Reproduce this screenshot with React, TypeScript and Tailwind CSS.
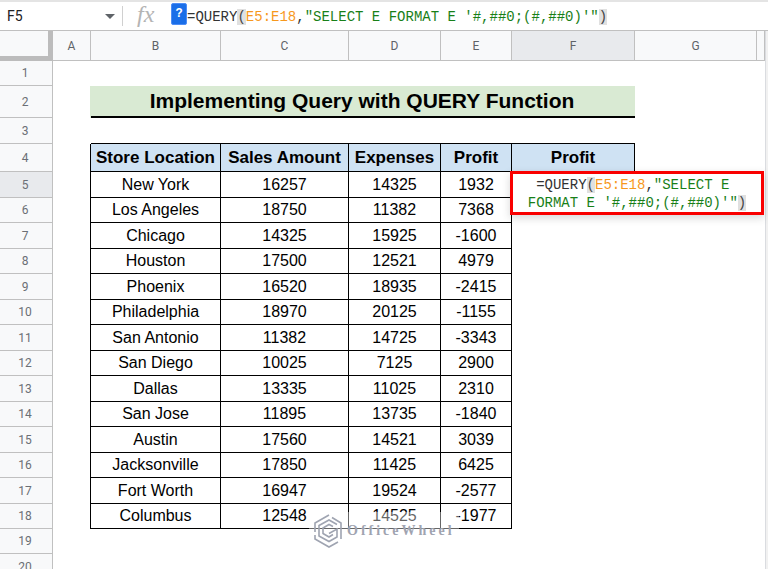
import { ReactNode } from "react"
import { clsx } from "clsx"

const columns = [
  { name: "A", width: "w-[38px]" },
  { name: "B", width: "w-[130px]" },
  { name: "C", width: "w-32" },
  { name: "D", width: "w-[92px]" },
  { name: "E", width: "w-[71px]" },
  { name: "F", width: "w-[123px]" },
  { name: "G", width: "w-[122px]" },
  { name: "", width: "" },
]

const headings = ["Store Location", "Sales Amount", "Expenses", "Profit", "Profit"]

const stores = [
  ["New York", 16257, 14325, 1932],
  ["Los Angeles", 18750, 11382, 7368],
  ["Chicago", 14325, 15925, -1600],
  ["Houston", 17500, 12521, 4979],
  ["Phoenix", 16520, 18935, -2415],
  ["Philadelphia", 18970, 20125, -1155],
  ["San Antonio", 11382, 14725, -3343],
  ["San Diego", 10025, 7125, 2900],
  ["Dallas", 13335, 11025, 2310],
  ["San Jose", 11895, 13735, -1840],
  ["Austin", 17560, 14521, 3039],
  ["Jacksonville", 17850, 11425, 6425],
  ["Fort Worth", 16947, 19524, -2577],
  ["Columbus", 12548, 14525, -1977],
]

function RowHeader({ children, active = false }: { children: ReactNode; active?: boolean }) {
  return (
    <th
      scope="row"
      className={clsx(
        "border-r border-b border-[#c0c0c0] p-0 pr-0.5 font-['Roboto',sans-serif] text-xs font-normal text-[#6b6f75]",
        active ? "bg-[#e8eaed]" : "bg-[#f8f9fa]"
      )}
    >
      {children}
    </th>
  )
}

function Formula() {
  return (
    <>
      <span className="text-[#333333]">=QUERY</span>
      <span className="bg-[#e0e0e0] text-[#444444]">(</span>
      <span className="text-[#f7981d]">E5:E18</span>
      <span className="text-[#333333]">,</span>
      <span className="text-[#188018]">"SELECT E </span>
      <span className="text-[#188018]">FORMAT E '#,##0;(#,##0)'"</span>
      <span className="bg-[#e0e0e0] text-[#444444]">)</span>
    </>
  )
}

function FormulaBar() {
  return (
    <header className="flex h-[31px] items-center border-t-2 border-b border-t-[#e4e4e4] border-b-[#c0c0c0] bg-white">
      <input
        aria-label="Name box"
        defaultValue="F5"
        className="w-[103px] pl-[7px] font-['Roboto',sans-serif] text-sm text-[#202124] outline-none"
      />
      <button aria-label="Named ranges" className="flex h-5 w-5 items-center border-r border-[#d0d0d0]">
        <svg viewBox="0 0 10 5" className="ml-[2px] h-[5px] w-[10px]" fill="#5f6368">
          <path d="M0 0h10L5 5z" />
        </svg>
      </button>
      <span className="w-12 pb-1 pl-3.5 font-['Liberation_Serif',serif] text-2xl leading-6 text-[#b4b4b4] italic">
        fx
      </span>
      <div className="relative flex-1 pl-4">
        <button
          aria-label="Formula help"
          className="absolute -top-1 left-0 h-[22px] w-4 rounded-xs border border-[#4d8df6] bg-[#1a6ee8] font-['Liberation_Mono',monospace] text-xs leading-4 font-bold text-white"
        >
          ?
        </button>
        <div
          role="textbox"
          aria-label="Formula"
          contentEditable
          suppressContentEditableWarning
          className="pt-px font-['Liberation_Mono',monospace] text-sm leading-[18px] whitespace-nowrap outline-none"
        >
          <Formula />
        </div>
      </div>
    </header>
  )
}

function CellEditor() {
  return (
    <div className="absolute -top-px -left-[2px] z-10 w-[254px] border-[3px] border-[#f90000] bg-white pt-0.5 shadow-[0_3px_8px_rgba(60,64,67,0.2)]">
      <div
        role="textbox"
        aria-label="Cell F5"
        contentEditable
        suppressContentEditableWarning
        className="px-3 text-center font-['Liberation_Mono',monospace] text-sm leading-[18px] whitespace-break-spaces outline-none"
      >
        <Formula />
      </div>
    </div>
  )
}

function Watermark() {
  return (
    <div className="absolute top-2 left-[88px] z-10 flex h-9 w-[150px] items-center gap-1 bg-white/40 pt-px pl-1 text-[#9fa4b1]">
      <svg viewBox="0 0 30 34" className="h-[34px] w-[30px] shrink-0" fill="none" stroke="currentColor" strokeWidth="1.6">
        <path d="M16 1 2 9v9M2 21v4l14 8 9-5" />
        <path d="M19 3.500 28 9v16" />
        <path d="M24 10.500 16 6 6 11.500V22l10 5.500 8-4.500v-8l-8 4.500" />
        <path d="M20 12.500 16 10.500 10 14v5.500l6 3.500 4-2.500" />
      </svg>
      <span className="font-['Liberation_Serif',serif] text-sm font-bold tracking-[3px]">OfficeWheel</span>
    </div>
  )
}

export default function App() {
  return (
    <div className="flex h-screen flex-col overflow-hidden bg-white">
      <FormulaBar />
      <main className="flex min-h-0 flex-1">
        <table className="w-full flex-1 table-fixed border-separate border-spacing-0 self-start text-center font-['Liberation_Sans',Arial,sans-serif] text-base leading-5 text-black">
          <colgroup>
            <col className="w-[53px]" />
            {columns.map((column) => (
              <col key={column.name} className={column.width} />
            ))}
          </colgroup>
          <thead>
            <tr className="h-[30px]">
              <td className="border-r-[5px] border-b-[5px] border-[#bcbcbc] bg-[#f8f9fa] p-0" />
              {columns.map((column) => (
                <th
                  key={column.name}
                  scope="col"
                  className={clsx(
                    "border-r border-b border-[#c0c0c0] p-0 font-['Roboto',sans-serif] text-xs font-normal text-[#5f6368]",
                    column.name === "F" ? "bg-[#e8eaed]" : "bg-[#f8f9fa]"
                  )}
                >
                  {column.name}
                </th>
              ))}
            </tr>
          </thead>
          <tbody>
            <tr className="h-[25px]">
              <RowHeader>1</RowHeader>
              <td colSpan={8} className="p-0" />
            </tr>
            <tr className="h-8">
              <RowHeader>2</RowHeader>
              <td className="border-r border-[#d9ead3] p-0" />
              <td colSpan={5} className="border-b-2 border-black bg-[#d9ead3] p-0 pr-0.5 text-[21px] font-bold">
                Implementing Query with QUERY Function
              </td>
            </tr>
            <tr className="h-[26px]">
              <RowHeader>3</RowHeader>
              <td className="p-0" />
              <td colSpan={5} className="border-b border-black p-0" />
            </tr>
            <tr className="h-7">
              <RowHeader>4</RowHeader>
              <td className="border-r border-black p-0" />
              {headings.map((heading, i) => (
                <td
                  key={i}
                  className="border-r border-b border-black bg-[#cfe2f3] p-0 text-[17px] font-bold whitespace-nowrap"
                >
                  {heading}
                </td>
              ))}
            </tr>
            {stores.map((store, i) => (
              <tr key={store[0]} className={i % 2 ? "h-[25px]" : "h-[26px]"}>
                <RowHeader active={i === 0}>{i + 5}</RowHeader>
                <td className="border-r border-black p-0" />
                {store.map((value, j) => (
                  <td key={j} className="relative border-r border-b border-black p-0">
                    {value}
                    {i === stores.length - 1 && j === 1 && <Watermark />}
                  </td>
                ))}
                <td className="relative p-0">{i === 0 && <CellEditor />}</td>
              </tr>
            ))}
            <tr className="h-[25px]">
              <RowHeader>19</RowHeader>
            </tr>
            <tr className="h-[26px]">
              <RowHeader>20</RowHeader>
            </tr>
          </tbody>
        </table>
        <div className="w-[3px] shrink-0 border-l border-[#dadce0] bg-[#f1f1f1]" />
      </main>
    </div>
  )
}
